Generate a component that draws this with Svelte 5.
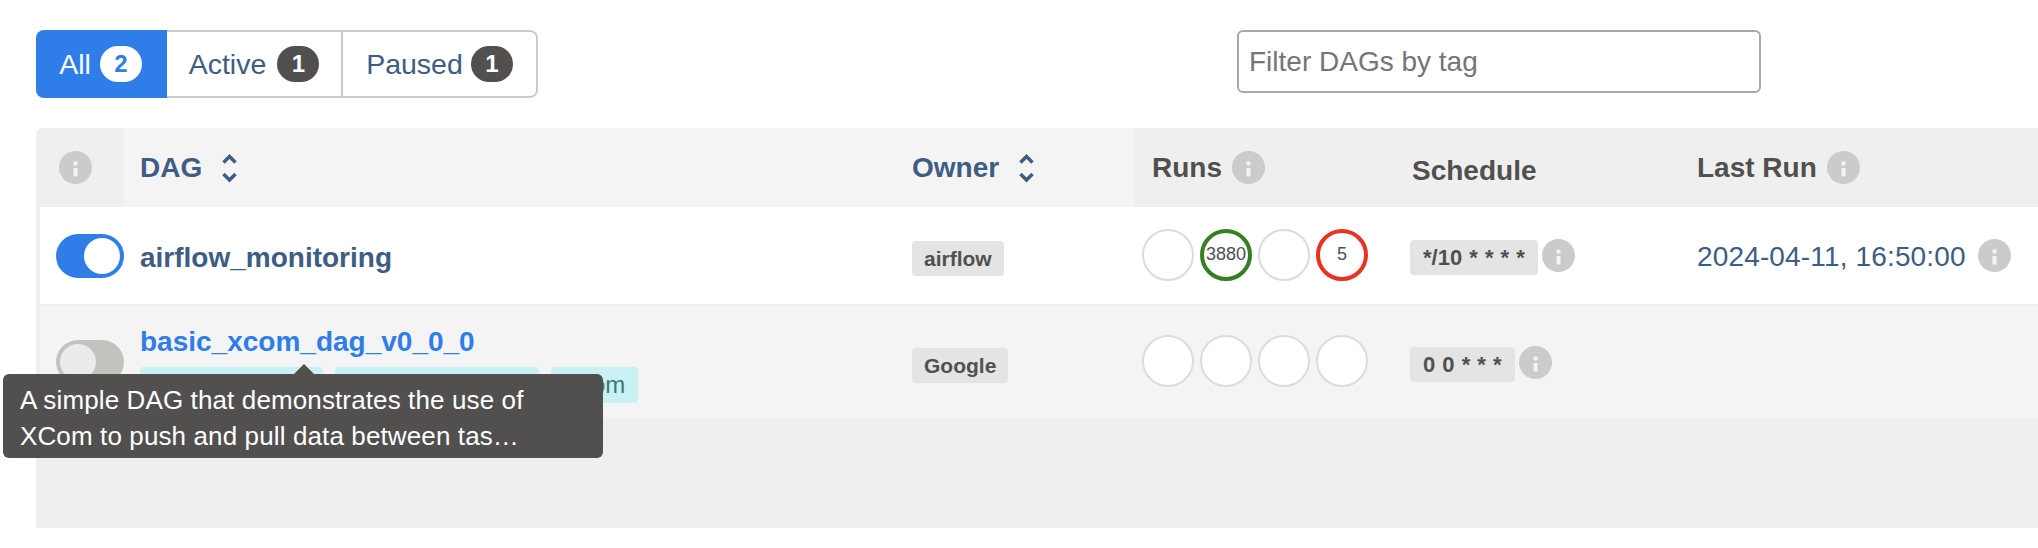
<script lang="ts">
  const filters = [
    { label: 'All', count: 2, active: true },
    { label: 'Active', count: 1, active: false },
    { label: 'Paused', count: 1, active: false }
  ];

  const dags = [
    {
      id: 'airflow_monitoring',
      paused: false,
      tags: [],
      owner: 'airflow',
      runs: [null, { n: 3880, state: 'success' }, null, { n: 5, state: 'failed' }],
      schedule: '*/10 * * * *',
      lastRun: '2024-04-11, 16:50:00'
    },
    {
      id: 'basic_xcom_dag_v0_0_0',
      paused: true,
      // first two tags sit behind the tooltip, their text can't be read
      tags: ['', '', 'xcom'],
      owner: 'Google',
      runs: [null, null, null, null],
      schedule: '0 0 * * *',
      lastRun: ''
    }
  ];
</script>

{#snippet info()}
  <svg class="info" width="33" height="33" viewBox="0 0 33 33">
    <circle cx="16.5" cy="16.5" r="16.5" fill="#cbcbcb" />
    <circle cx="16.5" cy="12.5" r="2.2" fill="#f4f4f4" />
    <rect x="14.5" y="17" width="4" height="8.500" fill="#f4f4f4" />
  </svg>
{/snippet}

{#snippet sort()}
  <svg class="sort" width="15" height="30" viewBox="0 0 15 30" fill="none" stroke="#3d5d82" stroke-width="3.500">
    <path d="M1.500 9.500 7.500 3.500 13.500 9.500" />
    <path d="M1.500 21 7.500 27 13.500 21" />
  </svg>
{/snippet}

<main class="page">
  <div class="toolbar">
    <div class="filters">
      {#each filters as f}
        <button class="filter" class:active={f.active}>
          {f.label}
          <span class="count">{f.count}</span>
        </button>
      {/each}
    </div>
    <input class="tag-filter" placeholder="Filter DAGs by tag" />
  </div>

  <div class="table-wrap">
    <table>
      <colgroup>
        <col style="width: 84px" />
        <col style="width: 772px" />
        <col style="width: 238px" />
        <col style="width: 260px" />
        <col style="width: 285px" />
        <col style="width: 359px" />
      </colgroup>
      <thead>
        <tr>
          <th class="th-info">{@render info()}</th>
          <th class="sorted"><span class="head-inner">DAG {@render sort()}</span></th>
          <th class="sorted"><span class="head-inner">Owner {@render sort()}</span></th>
          <th class="plain"><span class="head-inner info-gap">Runs {@render info()}</span></th>
          <th class="plain schedule-head"><span class="schedule-label">Schedule</span></th>
          <th class="plain last-head"><span class="head-inner info-gap">Last Run {@render info()}</span></th>
        </tr>
      </thead>
      <tbody>
        {#each dags as dag}
          <tr class:paused={dag.paused}>
            <td class="toggle-cell">
              <span class="toggle" class:on={!dag.paused}><span class="knob"></span></span>
            </td>
            <td>
              <a class="dag-name" href="#top">{dag.id}</a>
              {#if dag.tags.length}
                <div class="tags">
                  {#each dag.tags as tag}
                    <span class="tag">{tag}</span>
                  {/each}
                </div>
              {/if}
            </td>
            <td><span class="badge owner">{dag.owner}</span></td>
            <td class="runs-cell">
              <div class="runs">
                {#each dag.runs as run}
                  <span class="run {run ? run.state : ''}">{run ? run.n : ''}</span>
                {/each}
              </div>
            </td>
            <td>
              <span class="with-info"><span class="badge schedule">{dag.schedule}</span>{@render info()}</span>
            </td>
            <td>
              {#if dag.lastRun}
                <span class="with-info last-run"><span class="date">{dag.lastRun}</span>{@render info()}</span>
              {/if}
            </td>
          </tr>
        {/each}
      </tbody>
    </table>

    <div class="tooltip">A simple DAG that demonstrates the use of XCom to push and pull data between tas…</div>
  </div>
</main>

<style>
  :global(body) {
    margin: 0;
    background: #fff;
    overflow: hidden;
  }

  .page {
    height: 548px;
    padding: 30px 0 0 36px;
    box-sizing: border-box;
    font-family: "Liberation Sans", Arial, sans-serif;
    color: #51504f;
    overflow: hidden;
  }

  .toolbar {
    display: flex;
    align-items: flex-start;
    height: 98px;
  }

  .filters {
    display: flex;
    width: 502px;
    height: 68px;
  }

  .filter {
    display: flex;
    align-items: center;
    justify-content: center;
    gap: 9px;
    padding: 0;
    font: 28.5px "Liberation Sans", Arial, sans-serif;
    color: #3d5d82;
    background: #fff;
    border: 2px solid #cbcbcb;
    border-left-width: 0;
  }

  .filter:nth-child(1) { width: 131px; }
  .filter:nth-child(2) { width: 176px; gap: 11px; }
  .filter:nth-child(3) { width: 195px; gap: 8px; border-radius: 0 8px 8px 0; }

  .filter.active {
    color: #fff;
    background: #2f7de8;
    border-color: #2f7de8;
    border-radius: 8px 0 0 8px;
  }

  .count {
    display: flex;
    align-items: center;
    justify-content: center;
    width: 42px;
    height: 36px;
    border-radius: 18px;
    font-size: 24px;
    font-weight: 700;
    color: #fff;
    background: #51504f;
  }

  .active .count {
    color: #2f7de8;
    background: #fff;
  }

  .tag-filter {
    width: 524px;
    height: 63px;
    margin-left: 699px;
    padding: 0 10px;
    box-sizing: border-box;
    font: 28px "Liberation Sans", Arial, sans-serif;
    border: 2px solid #a8a8a8;
    border-radius: 6px;
    outline: none;
  }

  .tag-filter::placeholder {
    color: #757575;
    opacity: 1;
  }

  .table-wrap {
    position: relative;
    height: 400px;
    background: #efefef;
    border-left: 4px solid #efefef;
    border-top-left-radius: 6px;
  }

  table {
    width: 1998px;
    table-layout: fixed;
    border-collapse: separate;
    border-spacing: 0;
  }

  thead tr {
    height: 79px;
  }

  th {
    padding: 0 16px;
    text-align: left;
    font-size: 28px;
    font-weight: 700;
    white-space: nowrap;
  }

  th.th-info {
    padding: 0 0 0 19px;
  }

  th.sorted {
    color: #3d5d82;
    background: #f4f4f4;
  }

  th.plain {
    padding-left: 18px;
  }

  .head-inner {
    display: inline-flex;
    align-items: center;
    gap: 20px;
  }

  .info-gap {
    gap: 10px;
  }

  .schedule-label {
    display: block;
    margin-top: 6px;
  }

  .info, .sort {
    display: block;
    flex: none;
  }

  tbody tr {
    height: 99px;
    background: #fff;
  }

  tbody td {
    border-bottom: 2px solid #efefef;
  }

  tbody tr.paused {
    height: 112px;
    background: #f4f4f4;
  }

  tbody tr.paused td {
    border-bottom: 0;
  }

  td {
    padding: 0 16px;
    font-size: 28px;
    vertical-align: middle;
  }

  .toggle-cell {
    padding: 0 0 0 16px;
  }

  .toggle {
    display: flex;
    align-items: center;
    width: 68px;
    height: 44px;
    padding: 4px;
    box-sizing: border-box;
    border-radius: 22px;
    background: #c4c2bf;
  }

  .toggle.on {
    justify-content: flex-end;
    background: #2f7de8;
  }

  .knob {
    width: 36px;
    height: 36px;
    border-radius: 50%;
    background: #ebebeb;
  }

  .on .knob {
    background: #fff;
  }

  .dag-name {
    display: block;
    margin-top: 4px;
    font-size: 28px;
    line-height: 32px;
    font-weight: 700;
    color: #3d5d82;
    text-decoration: none;
  }

  .paused .dag-name {
    color: #2f7de8;
  }

  .tags {
    display: flex;
    gap: 12px;
    margin-top: 9px;
  }

  .tag {
    box-sizing: border-box;
    height: 36px;
    line-height: 36px;
    padding: 0 17px;
    border-radius: 4px;
    font-size: 24px;
    color: #3c7a7c;
    background: #c9f0f2;
  }

  .tag:nth-child(1) { width: 183px; }
  .tag:nth-child(2) { width: 204px; }
  .tag:nth-child(3) { width: 87px; }

  .badge {
    display: block;
    width: fit-content;
    height: 35px;
    line-height: 35px;
    border-radius: 4px;
    font-weight: 700;
    white-space: nowrap;
    background: #e4e4e4;
  }

  .owner {
    margin-top: 6px;
    padding: 0 12px;
    font-size: 21px;
  }

  .schedule {
    margin-top: 4px;
    padding: 0 13px;
    font-size: 22px;
    word-spacing: 1px;
  }

  .runs-cell {
    padding: 0 0 0 8px;
  }

  .runs {
    display: flex;
    align-items: center;
    gap: 6px;
    margin-top: -2px;
  }

  .run {
    display: flex;
    align-items: center;
    justify-content: center;
    width: 52px;
    height: 52px;
    box-sizing: border-box;
    border: 2px solid #dcdcdc;
    border-radius: 50%;
    font-size: 18px;
    background: #fff;
    color: #51504f;
  }

  .run.success {
    border: 4px solid #348022;
  }

  .run.failed {
    border: 4px solid #e83222;
  }

  .with-info {
    display: inline-flex;
    align-items: center;
    gap: 4px;
  }

  .last-run {
    gap: 12px;
    margin-left: 2px;
    color: #3d5d82;
    white-space: nowrap;
  }

  .date {
    margin-top: 2px;
    letter-spacing: 0.15px;
  }

  .tooltip {
    position: absolute;
    left: -37px;
    top: 246px;
    width: 600px;
    height: 84px;
    padding: 8px 17px;
    box-sizing: border-box;
    border-radius: 6px;
    font-size: 26px;
    line-height: 36px;
    letter-spacing: 0.12px;
    color: #fff;
    background: #51504f;
  }

  .tooltip::before {
    content: "";
    position: absolute;
    left: 291px;
    top: -10px;
    border-left: 10px solid transparent;
    border-right: 10px solid transparent;
    border-bottom: 10px solid #51504f;
  }
</style>
